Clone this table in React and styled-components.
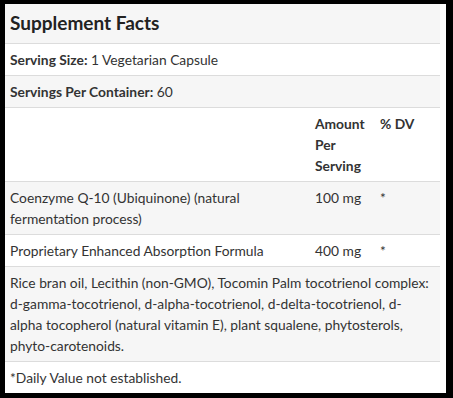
import React from "react";
import styled, { createGlobalStyle } from "styled-components";

const Global = createGlobalStyle`
  html, body { margin: 0; padding: 0; background: #fff; }
  body { font-family: Lato, "Noto Sans", sans-serif; color: #333; }
`;

const Frame = styled.div`
  width: 453px;
  height: 398px;
  box-sizing: border-box;
  border-style: solid;
  border-color: #000;
  border-width: 4px 7px 5px 5px;
  padding-right: 6px;
  background: #fff;
  overflow: hidden;
`;

const Panel = styled.div`
  display: flex;
  flex-direction: column;
`;

const Row = styled.div`
  display: grid;
  grid-template-columns: 305px 65px 65px;
  background: ${(p) => (p.$shade ? "#f6f6f6" : "#fff")};
  border-bottom: 1px solid #dcdcdc;
  font-size: 13.8px;
  line-height: 21px;
`;

const Cell = styled.div`
  grid-column: ${(p) => (p.$span ? `span ${p.$span}` : "auto")};
  padding: 5px 9px 5px 5px;
  font-weight: ${(p) => (p.$bold ? 700 : 400)};
`;

const Title = styled.div`
  grid-column: span 3;
  padding: 6px 5px 7px;
  font-size: 19px;
  line-height: 26px;
  font-weight: 700;
  color: #222;
`;

const Label = styled.b`
  font-weight: 700;
`;

export default function App() {
  return (
    <>
      <Global />
      <Frame>
        <Panel>
          <Row $shade>
            <Title>Supplement Facts</Title>
          </Row>
          <Row>
            <Cell $span={3}>
              <Label>Serving Size:</Label> 1 Vegetarian Capsule
            </Cell>
          </Row>
          <Row $shade>
            <Cell $span={3}>
              <Label>Servings Per Container:</Label> 60
            </Cell>
          </Row>
          <Row>
            <Cell />
            <Cell $bold>Amount Per Serving</Cell>
            <Cell $bold>% DV</Cell>
          </Row>
          <Row $shade>
            <Cell>Coenzyme Q-10 (Ubiquinone) (natural fermentation process)</Cell>
            <Cell>100 mg</Cell>
            <Cell>*</Cell>
          </Row>
          <Row>
            <Cell>Proprietary Enhanced Absorption Formula</Cell>
            <Cell>400 mg</Cell>
            <Cell>*</Cell>
          </Row>
          <Row $shade>
            <Cell $span={3}>
              Rice bran oil, Lecithin (non-GMO), Tocomin Palm tocotrienol complex:
              d-gamma-tocotrienol, d-alpha-tocotrienol, d-delta-tocotrienol, d-alpha
              tocopherol (natural vitamin E), plant squalene, phytosterols,
              phyto-carotenoids.
            </Cell>
          </Row>
          <Row>
            <Cell $span={3}>*Daily Value not established.</Cell>
          </Row>
        </Panel>
      </Frame>
    </>
  );
}
